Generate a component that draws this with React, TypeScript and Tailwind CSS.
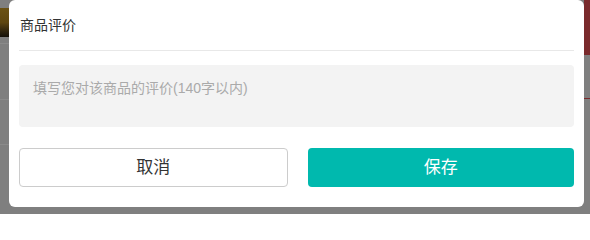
import React from "react";

function LeftStrip() {
  return (
    <div className="w-[9px] shrink-0 flex flex-col">
      <div className="h-[8px]" />
      <div className="h-[29px] bg-gradient-to-b from-[#6b5214] via-[#5e4610] to-[#141008]" />
      <div className="h-[6px]" />
      <div className="h-px bg-[#8a8a8a]" />
      <div className="h-[55px]" />
      <div className="h-px bg-[#8a8a8a]" />
      <div className="h-[44px]" />
      <div className="h-px bg-[#8a8a8a]" />
    </div>
  );
}

function RightStrip() {
  return (
    <div className="flex-1 flex flex-col">
      <div className="h-[55px] bg-[#7a2a2c]" />
      <div className="h-[43px]" />
      <div className="h-px bg-[#7a2a2c]" />
    </div>
  );
}

export default function App() {
  const font = { fontFamily: '"Liberation Sans", "Noto Sans CJK SC", sans-serif' };
  return (
    <div className="w-[590px] h-[214px] overflow-hidden bg-[#7f7f7f] flex items-start" style={font}>
      <LeftStrip />
      <div className="w-[575px] h-[207px] shrink-0 bg-white rounded-md px-[10px] flex flex-col">
        <div className="h-[51px] flex items-center border-b border-[#e8e8e8] pl-px">
          <span className="text-[14px] text-[#333] leading-none">商品评价</span>
        </div>
        <div className="mt-[14px] h-[62px] bg-[#f3f3f3] rounded-[4px] px-[14px] pt-[11px]">
          <span className="text-[14px] text-[#aaa] leading-[20px]">填写您对该商品的评价(140字以内)</span>
        </div>
        <div className="mt-[21px] flex gap-[20px]">
          <button className="flex-1 h-[39px] border border-[#ccc] rounded-[4px] bg-white text-[17px] text-[#333] flex items-center justify-center">
            取消
          </button>
          <button className="flex-1 h-[39px] rounded-[4px] bg-[#00b9ae] text-[17px] text-white flex items-center justify-center">
            保存
          </button>
        </div>
      </div>
      <RightStrip />
    </div>
  );
}
